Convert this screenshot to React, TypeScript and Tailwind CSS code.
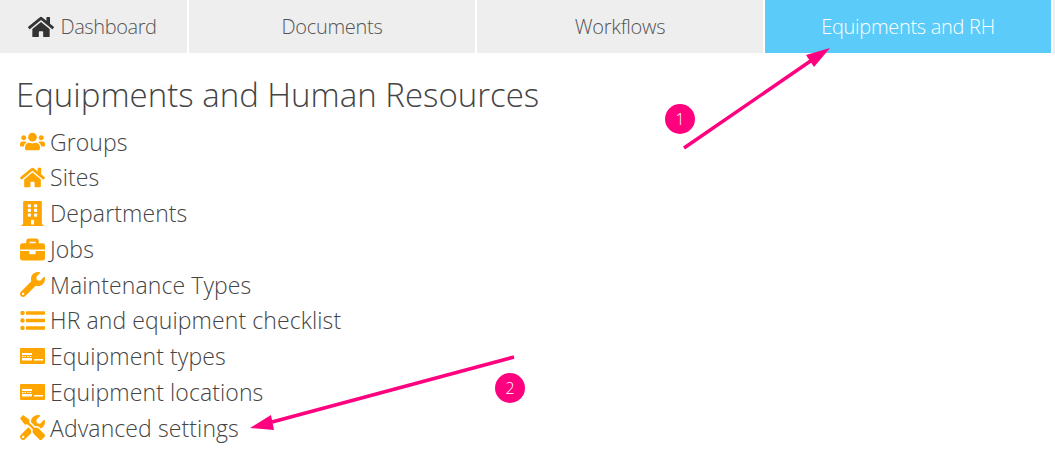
import { FaHome, FaUsers, FaBuilding, FaBriefcase, FaWrench, FaTools } from 'react-icons/fa';
import type { ReactNode } from 'react';

// small card-like glyph used for the equipment rows
function EquipIcon() {
  return (
    <svg viewBox="0 0 25 16" className="w-[25px] h-[16px]">
      <path fill="#ffa500" fillRule="evenodd" d="M1 0h23a1 1 0 0 1 1 1v14a1 1 0 0 1-1 1H1a1 1 0 0 1-1-1V1a1 1 0 0 1 1-1zM2 5v2h10V5zm0 3v1h1.500V8zm2.500 0v1H6V8zM7 8v1h1.500V8zm2.500 0v1H11V8zM2 10v2.500h10V10zm12 1v1.500h9V11z" />
    </svg>
  );
}

function ListIcon() {
  return (
    <svg viewBox="0 0 25 19" className="w-[25px] h-[19px]" fill="#ffa500">
      <circle cx="2.500" cy="2" r="2.200" />
      <circle cx="2.500" cy="9.500" r="2.200" />
      <circle cx="2.500" cy="17" r="2.200" />
      <rect x="6" y="0.300" width="19" height="3.500" rx="0.500" />
      <rect x="6" y="7.700" width="19" height="3.500" rx="0.500" />
      <rect x="6" y="15.200" width="19" height="3.500" rx="0.500" />
    </svg>
  );
}

const items: { label: string; icon: ReactNode }[] = [
  { label: 'Groups', icon: <FaUsers size={25} /> },
  { label: 'Sites', icon: <FaHome size={25} /> },
  { label: 'Departments', icon: <FaBuilding size={25} /> },
  { label: 'Jobs', icon: <FaBriefcase size={25} /> },
  { label: 'Maintenance Types', icon: <FaWrench size={25} /> },
  { label: 'HR and equipment checklist', icon: <ListIcon /> },
  { label: 'Equipment types', icon: <EquipIcon /> },
  { label: 'Equipment locations', icon: <EquipIcon /> },
  { label: 'Advanced settings', icon: <FaTools size={25} /> },
];

export default function App() {
  return (
    <div className="relative w-[1055px] h-[468px] bg-white overflow-hidden font-['Open_Sans',sans-serif] font-light">
      <div className="flex gap-[2px] h-[53px] text-[20px] tracking-[-0.3px]">
        <div className="w-[187px] pr-[2px] bg-[#eeeeee] text-[#555] flex items-center justify-center gap-[6px] tracking-[-0.4px]">
          <FaHome size={26} className="text-[#333]" />
          <span>Dashboard</span>
        </div>
        <div className="w-[286px] bg-[#eeeeee] text-[#555] flex items-center justify-center">Documents</div>
        <div className="w-[286px] bg-[#eeeeee] text-[#555] flex items-center justify-center">Workflows</div>
        <div className="w-[286px] bg-[#5bcbf9] text-white flex items-center justify-center">Equipments and RH</div>
        <div className="flex-1 bg-[#eeeeee]" />
      </div>

      <h1 className="pl-[16px] mt-[17px] h-[50px] leading-[50px] text-[33px] text-[#444]">
        Equipments and Human Resources
      </h1>

      <ul className="pl-[20px] mt-[4px] text-[23px] text-[#444] tracking-[0.1px]">
        {items.map(item => (
          <li key={item.label} className="flex items-center h-[35.75px]">
            <span className="w-[30px] flex items-center text-[#ffa500]">{item.icon}</span>
            <span>{item.label}</span>
          </li>
        ))}
      </ul>

      {/* annotations lying over the page */}
      <svg className="absolute inset-0 w-[1055px] h-[468px] pointer-events-none" viewBox="0 0 1055 468">
        <line x1="684" y1="148" x2="812" y2="60" stroke="#ff007f" strokeWidth="3.5" />
        <polygon points="830,48 806,55 814,67" fill="#ff007f" />
        <line x1="514" y1="357" x2="272" y2="422" stroke="#ff007f" strokeWidth="3.5" />
        <polygon points="250,428 271,415 274,430" fill="#ff007f" />
      </svg>
      <div className="absolute left-[665px] top-[104px] w-[30px] h-[30px] rounded-full bg-[#ff007f] text-white text-[16px] flex items-center justify-center">1</div>
      <div className="absolute left-[495px] top-[373px] w-[30px] h-[30px] rounded-full bg-[#ff007f] text-white text-[16px] flex items-center justify-center">2</div>
    </div>
  );
}
